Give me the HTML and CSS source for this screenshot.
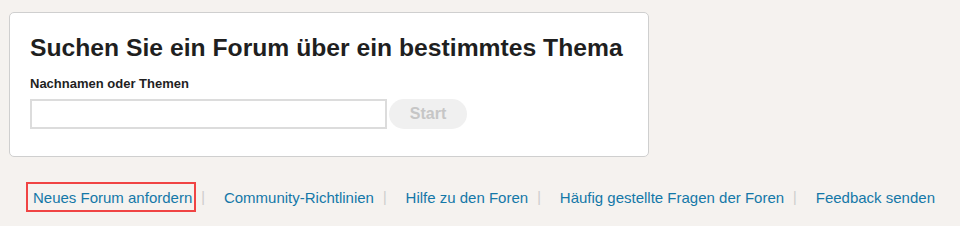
FILE: index.html
```html
<!DOCTYPE html>
<html lang="de">
<head>
<meta charset="utf-8">
<link rel="stylesheet" href="styles.css">
</head>
<body>
<div class="page">
  <section class="card">
    <h2 class="title">Suchen Sie ein Forum über ein bestimmtes Thema</h2>
    <label class="label" for="q">Nachnamen oder Themen</label>
    <div class="search-row">
      <input id="q" class="search-input" type="text">
      <button class="start-btn" type="button">Start</button>
    </div>
  </section>
  <ul class="footer-links">
    <li><a class="link focused" href="#">Neues Forum anfordern</a></li>
    <li><a class="link" href="#">Community-Richtlinien</a></li>
    <li><a class="link" href="#">Hilfe zu den Foren</a></li>
    <li><a class="link" href="#">Häufig gestellte Fragen der Foren</a></li>
    <li><a class="link" href="#">Feedback senden</a></li>
  </ul>
</div>
</body>
</html>
```
FILE: styles.css
```css
html, body {
  margin: 0;
  padding: 0;
  background: #f5f2ef;
  font-family: "Liberation Sans", Arial, sans-serif;
  color: #1f1f1f;
}
.page {
  padding: 12px 0 0 9px;
}
.card {
  box-sizing: border-box;
  width: 640px;
  background: #fff;
  border: 1px solid #cfcfcf;
  border-radius: 5px;
  padding: 19px 20px 27px 20px;
}
.title {
  margin: 0;
  font-size: 24.7px;
  line-height: 32px;
  font-weight: 700;
  color: #1f1f1f;
  white-space: nowrap;
}
.label {
  display: block;
  margin-top: 12px;
  font-size: 13px;
  line-height: 16px;
  font-weight: 700;
}
.search-row {
  display: flex;
  margin-top: 7px;
  gap: 2px;
}
.search-input {
  box-sizing: border-box;
  width: 357px;
  height: 30px;
  border: 2px solid #dcdcdc;
  margin: 0;
  padding: 0 8px;
  font: inherit;
}
.start-btn {
  width: 78px;
  height: 30px;
  border: none;
  border-radius: 15px;
  background: #f0f0f0;
  color: #c6c6c6;
  font-family: inherit;
  font-size: 16px;
  font-weight: 700;
  padding: 0;
}
.footer-links {
  list-style: none;
  display: flex;
  margin: 25px 0 0 17px;
  padding: 0;
  white-space: nowrap;
}
.footer-links li {
  display: flex;
  align-items: center;
}
.footer-links li + li::before {
  content: "|";
  color: #cccccc;
  font-size: 14px;
  margin: 0 12px 0 5px;
}
.link {
  display: inline-block;
  padding: 5px 2px 3px 5px;
  font-size: 15px;
  line-height: 18px;
  color: #1478a8;
  text-decoration: none;
  border: 2px solid transparent;
}
.link.focused {
  border-color: #f04444;
}
```
